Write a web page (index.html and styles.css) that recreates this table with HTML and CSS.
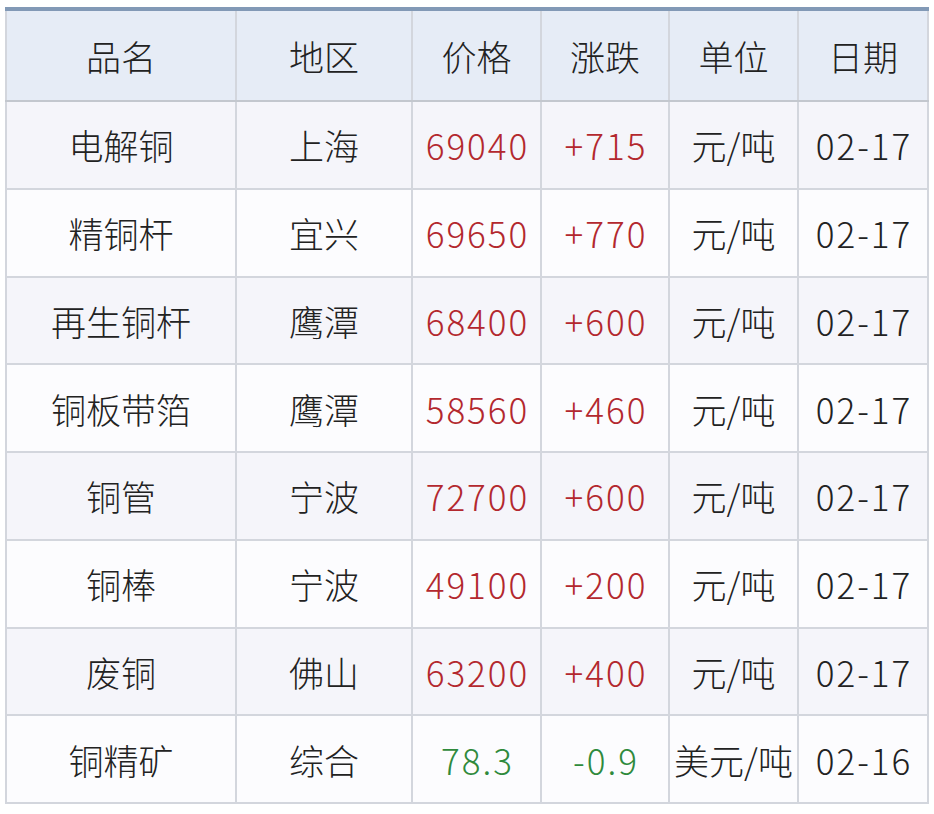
FILE: index.html
```html
<!DOCTYPE html>
<html lang="zh">
<head>
<meta charset="utf-8">
<link rel="stylesheet" href="styles.css">
</head>
<body>
<table class="price">
  <colgroup>
    <col class="c1"><col class="c2"><col class="c3"><col class="c4"><col class="c5"><col class="c6">
  </colgroup>
  <thead>
    <tr><th>品名</th><th>地区</th><th>价格</th><th>涨跌</th><th>单位</th><th>日期</th></tr>
  </thead>
  <tbody>
    <tr><td>电解铜</td><td>上海</td><td class="num up">69040</td><td class="num up">+715</td><td>元/吨</td><td class="num">02-17</td></tr>
    <tr><td>精铜杆</td><td>宜兴</td><td class="num up">69650</td><td class="num up">+770</td><td>元/吨</td><td class="num">02-17</td></tr>
    <tr><td>再生铜杆</td><td>鹰潭</td><td class="num up">68400</td><td class="num up">+600</td><td>元/吨</td><td class="num">02-17</td></tr>
    <tr><td>铜板带箔</td><td>鹰潭</td><td class="num up">58560</td><td class="num up">+460</td><td>元/吨</td><td class="num">02-17</td></tr>
    <tr><td>铜管</td><td>宁波</td><td class="num up">72700</td><td class="num up">+600</td><td>元/吨</td><td class="num">02-17</td></tr>
    <tr><td>铜棒</td><td>宁波</td><td class="num up">49100</td><td class="num up">+200</td><td>元/吨</td><td class="num">02-17</td></tr>
    <tr><td>废铜</td><td>佛山</td><td class="num up">63200</td><td class="num up">+400</td><td>元/吨</td><td class="num">02-17</td></tr>
    <tr><td>铜精矿</td><td>综合</td><td class="num down">78.3</td><td class="num down">-0.9</td><td>美元/吨</td><td class="num">02-16</td></tr>
  </tbody>
</table>
</body>
</html>
```
FILE: styles.css
```css
html, body {
  margin: 0;
  padding: 0;
  background: #ffffff;
}
body {
  padding: 7px 0 0 5px;
  font-family: "Noto Sans CJK SC", "Noto Sans", sans-serif;
}
.price {
  border-collapse: collapse;
  width: 922px;
  table-layout: fixed;
  border-top: 4px solid #8299b6;
  color: #222;
  font-size: 35px;
  font-weight: 300;
}
.c1 { width: 230px; }
.c2 { width: 176px; }
.c3 { width: 129px; }
.c4 { width: 128px; }
.c5 { width: 129px; }
.c6 { width: 130px; }
.price th,
.price td {
  border: 2px solid #d3d6dd;
  text-align: center;
  vertical-align: middle;
  padding: 0;
  white-space: nowrap;
  font-weight: 300;
}
.price th {
  height: 89px;
  background: #e6ecf6;
  border-top: none;
  border-bottom-color: #c3c7ce;
}
.price td {
  height: 85.75px;
}
.price td.num {
  letter-spacing: 2px;
  text-indent: 2px;
}
.price tbody tr:nth-child(odd) td { background: #f5f5fa; }
.price tbody tr:nth-child(even) td { background: #fcfcfe; }
.price .up { color: #b3282e; }
.price .down { color: #2f8a3c; }
```
